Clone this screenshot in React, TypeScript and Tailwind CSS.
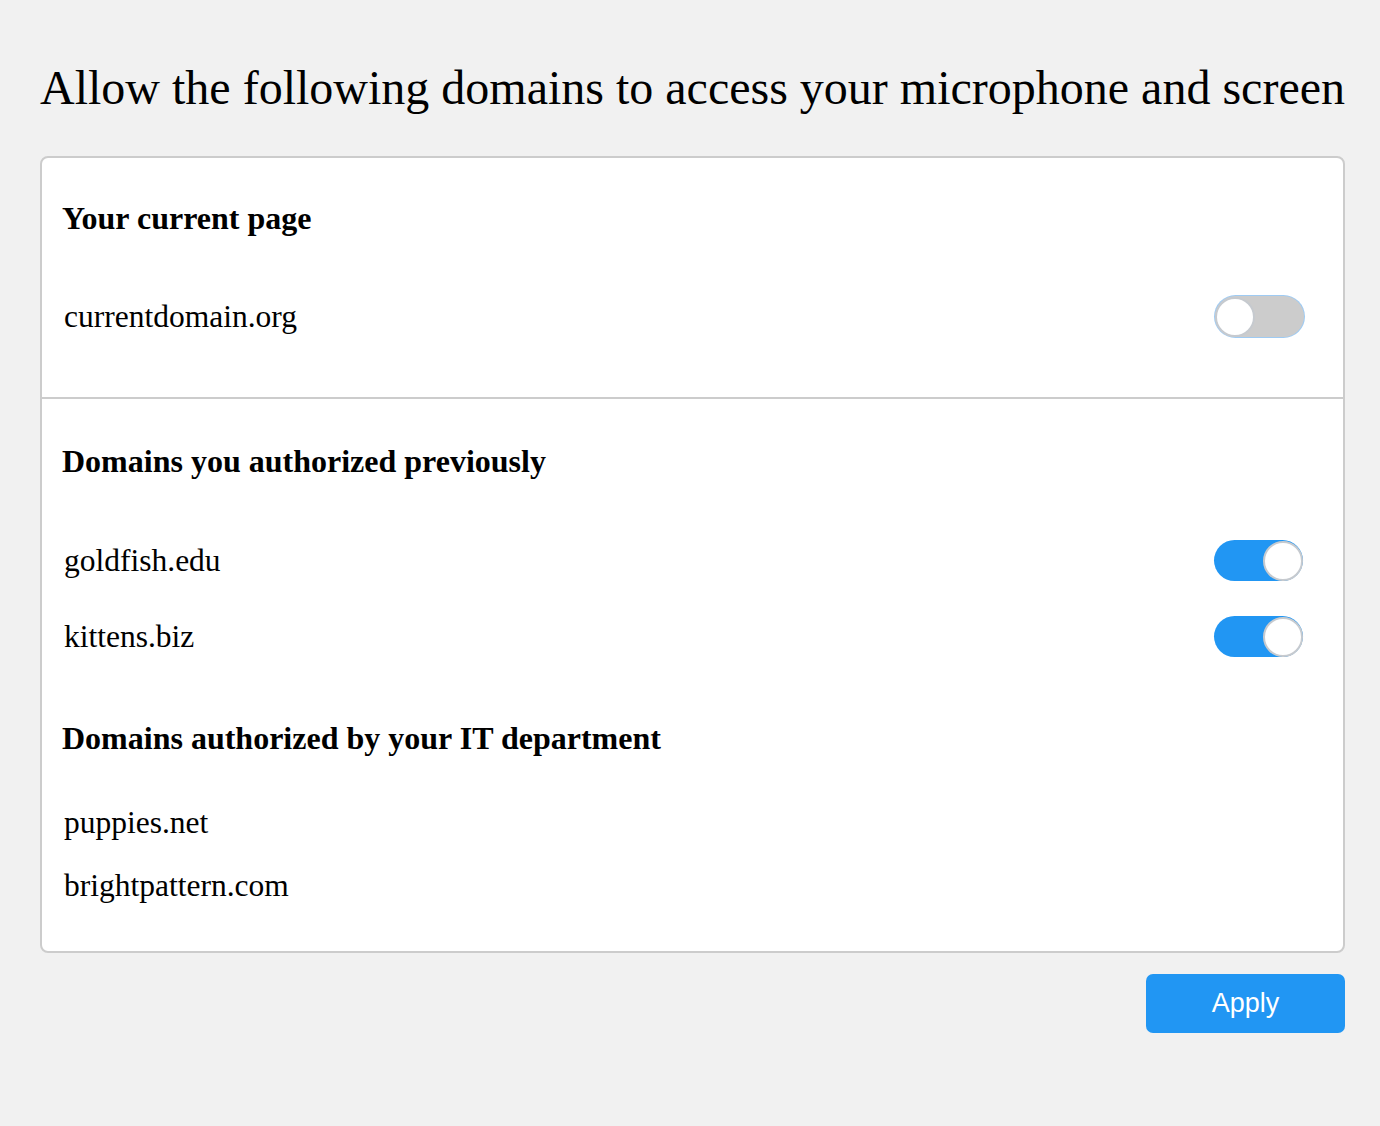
import { useState } from "react";

type Domain = { name: string; enabled: boolean };

function Toggle({ on, focused, onClick }: { on: boolean; focused?: boolean; onClick: () => void }) {
  return (
    <button
      type="button"
      onClick={onClick}
      className={`relative flex h-[41px] w-[89px] shrink-0 items-center rounded-full ${
        on ? "bg-[#2196f3]" : "bg-[#cccccc]"
      } ${focused ? "ring-1 ring-[#9fcbf3]" : ""}`}
    >
      <span
        className={`absolute top-[0.5px] h-[40px] w-[40px] rounded-full border-2 border-[#c6cacf] bg-white ${
          on ? "right-0" : "left-0"
        }`}
      />
    </button>
  );
}

function Heading({ children }: { children: string }) {
  return <h2 className="text-[32px] font-bold leading-[36px] text-black">{children}</h2>;
}

export default function App() {
  const [current, setCurrent] = useState(false);
  const [previous, setPrevious] = useState<Domain[]>([
    { name: "goldfish.edu", enabled: true },
    { name: "kittens.biz", enabled: true },
  ]);
  const managed = ["puppies.net", "brightpattern.com"];

  const flip = (name: string) =>
    setPrevious((list) => list.map((d) => (d.name === name ? { ...d, enabled: !d.enabled } : d)));

  return (
    <div className="min-h-screen bg-[#f1f1f1] pl-[40px] pr-[35px] pt-[58px] font-['Liberation_Serif',serif] text-black">
      <h1 className="text-[48px] leading-[60px] whitespace-nowrap">
        Allow the following domains to access your microphone and screen
      </h1>

      <div className="mt-[38px] rounded-lg border-2 border-[#cccccc] bg-white">
        {/* current page */}
        <div className="pt-[42px] pb-[60px] pl-[20px] pr-[39px]">
          <Heading>Your current page</Heading>
          <div className="mt-[60px] flex items-center justify-between pl-[2px]">
            <span className="text-[31.5px] leading-[36px]">currentdomain.org</span>
            <Toggle on={current} focused onClick={() => setCurrent(!current)} />
          </div>
        </div>

        <div className="border-t-2 border-[#cccccc]" />

        <div className="pt-[44px] pb-[47px] pl-[20px] pr-[40px]">
          <Heading>Domains you authorized previously</Heading>
          <div className="mt-[61px] flex flex-col gap-[35px] pl-[2px]">
            {previous.map((d) => (
              <div key={d.name} className="flex items-center justify-between">
                <span className="text-[31.5px] leading-[36px]">{d.name}</span>
                <Toggle on={d.enabled} onClick={() => flip(d.name)} />
              </div>
            ))}
          </div>

          <div className="mt-[63px]">
            <Heading>Domains authorized by your IT department</Heading>
          </div>
          <div className="mt-[49px] flex flex-col gap-[27px] pl-[2px]">
            {managed.map((name) => (
              <span key={name} className="text-[31.5px] leading-[36px]">
                {name}
              </span>
            ))}
          </div>
        </div>
      </div>

      <div className="mt-[21px] flex justify-end">
        <button
          type="button"
          className="h-[59px] w-[199px] rounded-[7px] bg-[#2196f3] font-['Liberation_Sans',sans-serif] text-[27px] text-white"
        >
          Apply
        </button>
      </div>
    </div>
  );
}
